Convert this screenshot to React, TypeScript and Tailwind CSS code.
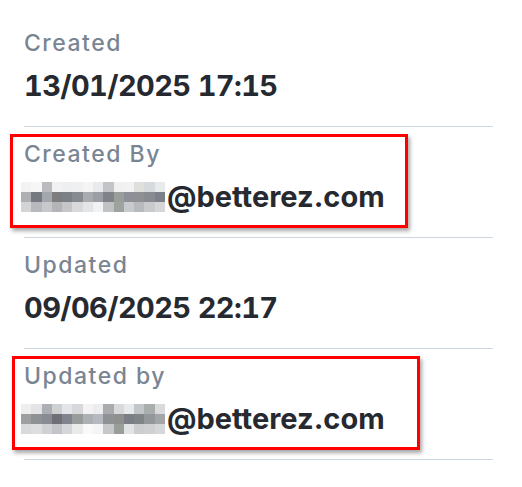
import React from 'react';

const mosaicA = [
  ['#f2f2f3', '#f6f6f7', '#b9bbbf', '#f1f1f2', '#eeeff0', '#eef0f1', '#f4f4f5', '#e9eaeb', '#c2c4c8', '#f0f0f1', '#f2f2f3', '#dfdfdc', '#d6dadd', '#e8eaec'],
  ['#aeb0b4', '#757a80', '#a3a6ac', '#7d7d80', '#7b7f86', '#878b90', '#a9acae', '#9b9ea4', '#7f8388', '#9a9e9b', '#8d9197', '#8e9093', '#888b90', '#7c8088'],
  ['#d3d4d6', '#b7b9bd', '#c7c8cb', '#b3b4b6', '#c6c6c9', '#d8d9da', '#e3e5e7', '#f1f2f3', '#c0c2c4', '#9ea39e', '#c8cbce', '#b8b9bb', '#c9cacc', '#d5d6d8'],
];

const mosaicB = [
  ['#eeeeef', '#e4e4e6', '#adafb6', '#cfd0d2', '#e3e5e8', '#d7d8da', '#f4f2f2', '#eceded', '#a9abaf', '#d8d9da', '#e8e9ea', '#c3c6c9', '#a8aeac', '#d9dadc'],
  ['#9d9fa1', '#8f9295', '#888b92', '#6e7075', '#81848f', '#999c9b', '#aeb1b3', '#b6bac0', '#8f9194', '#8e908f', '#7b7e84', '#7f8586', '#94979a', '#a3a5a8'],
  ['#d8d9db', '#dcdee0', '#d0d1d4', '#c3c4c7', '#d5d6d9', '#e9eaea', '#f9f9fa', '#f4f5f6', '#c7c8ca', '#9a9e99', '#e1e3e5', '#cbcdcf', '#cfd0d2', '#d6d7d9'],
];

function Mosaic({ cells }: { cells: string[][] }) {
  return (
    <span className="flex flex-col w-[144px] mr-[2px]">
      {cells.map((row, r) => (
        <span key={r} className="flex">
          {row.map((c, i) => (
            <span key={i} className="block flex-1 h-[10px]" style={{ backgroundColor: c }} />
          ))}
        </span>
      ))}
    </span>
  );
}

function Field({ label, value, mosaic, boxed }: { label: string; value: string; mosaic?: string[][]; boxed?: string }) {
  return (
    <div className="relative border-b border-[#cdd5df] pt-[13px] pb-[22px]">
      {boxed && (
        <div
          className={`absolute top-[7px] h-[94px] border-[3px] border-[#ff0000] shadow-[2px_3px_4px_rgba(0,0,0,0.35)] pointer-events-none ${boxed}`}
        />
      )}
      <div className="text-[23px] leading-[28px] font-medium tracking-[1.5px] text-[#7a8593]">{label}</div>
      <div className="mt-[11px] text-[29px] leading-[36px] font-bold text-[#262a30] flex items-center">
        {mosaic ? (
          <>
            <span className="-ml-[3px] flex"><Mosaic cells={mosaic} /></span>
            <span>{value}</span>
          </>
        ) : (
          <span className="tabular-nums tracking-[-0.6px]">{value}</span>
        )}
      </div>
    </div>
  );
}

export default function App() {
  return (
    <div className="w-[522px] h-[487px] bg-white pt-4 pl-6" style={{ fontFamily: 'Inter, "Noto Sans", sans-serif' }}>
      <div className="w-[469px]">
        <Field label="Created" value="13/01/2025 17:15" />
        <Field label="Created By" value="@betterez.com" mosaic={mosaicA} boxed="-left-[14px] w-[398px]" />
        <Field label="Updated" value="09/06/2025 22:17" />
        <Field label="Updated by" value="@betterez.com" mosaic={mosaicB} boxed="-left-[12px] w-[408px]" />
      </div>
    </div>
  );
}
